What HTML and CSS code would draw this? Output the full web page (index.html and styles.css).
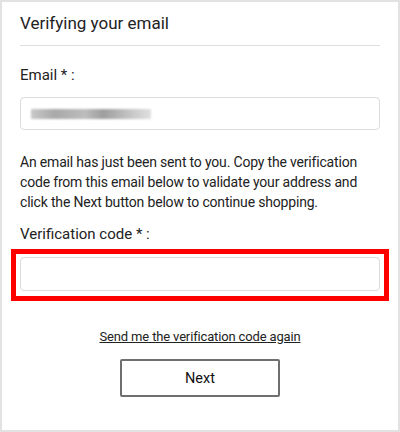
FILE: index.html
```html
<!DOCTYPE html>
<html lang="en">
<head>
    <meta charset="UTF-8">
    <title>Verifying your email</title>
    <link rel="stylesheet" href="styles.css">
</head>
<body>
    <div class="frame">
        <h1 class="title">Verifying your email</h1>

        <label class="field-label" for="email">Email * :</label>
        <div class="input email-input" id="email">
            <span class="blur"></span>
        </div>

        <p class="info">An email has just been sent to you. Copy the verification code from this email below to validate your address and click the Next button below to continue shopping.</p>

        <label class="field-label code-label" for="code">Verification code * :</label>
        <div class="highlight">
            <input class="input" id="code" type="text">
        </div>

        <a class="resend" href="#">Send me the verification code again</a>

        <button class="next">Next</button>
    </div>
</body>
</html>
```

FILE: styles.css
```css
body {
    margin: 0;
    font-family: Roboto, "Liberation Sans", Arial, sans-serif;
    color: #222;
    background: #fff;
}

.frame {
    width: 400px;
    height: 432px;
    box-sizing: border-box;
    border: 2px solid #e2e2e2;
    padding: 0 18px;
    display: flex;
    flex-direction: column;
}

.title {
    margin: 0;
    padding: 10px 0 11px;
    font-size: 17px;
    font-weight: normal;
    line-height: 22px;
    border-bottom: 1px solid #dedede;
}

.field-label {
    display: block;
    margin-top: 20px;
    font-size: 15px;
    line-height: 18px;
}

.input {
    display: block;
    width: 100%;
    height: 33px;
    box-sizing: border-box;
    margin: 0;
    border: 1px solid #dcdcdc;
    border-radius: 4px;
    background: #fff;
    padding: 0 10px;
}

.email-input {
    margin-top: 13px;
    display: flex;
    align-items: center;
}

.blur {
    width: 120px;
    height: 10px;
    background: linear-gradient(90deg, #c8c8c8, #a9a9a9 20%, #bdbdbd 45%, #9e9e9e 60%, #c9c9c9 85%, #e0e0e0);
    filter: blur(1px);
}

.info {
    margin: 22px 0 0;
    font-size: 14px;
    line-height: 20px;
    letter-spacing: -0.18px;
}

.code-label {
    margin-top: 13px;
}

.highlight {
    margin: 6px -9px 0;
    border: 5px solid #ff0000;
    padding: 3px 4px 5px;
}

.highlight .input {
    height: 34px;
}

.resend {
    align-self: center;
    margin-top: 27px;
    font-size: 13px;
    line-height: 18px;
    letter-spacing: -0.15px;
    color: #222;
}

.next {
    align-self: center;
    margin-top: 13px;
    width: 160px;
    height: 38px;
    background: #fff;
    border: 2px solid #6f6f6f;
    border-radius: 2px;
    font-family: inherit;
    font-size: 14.5px;
    color: #111;
    cursor: pointer;
}
```
